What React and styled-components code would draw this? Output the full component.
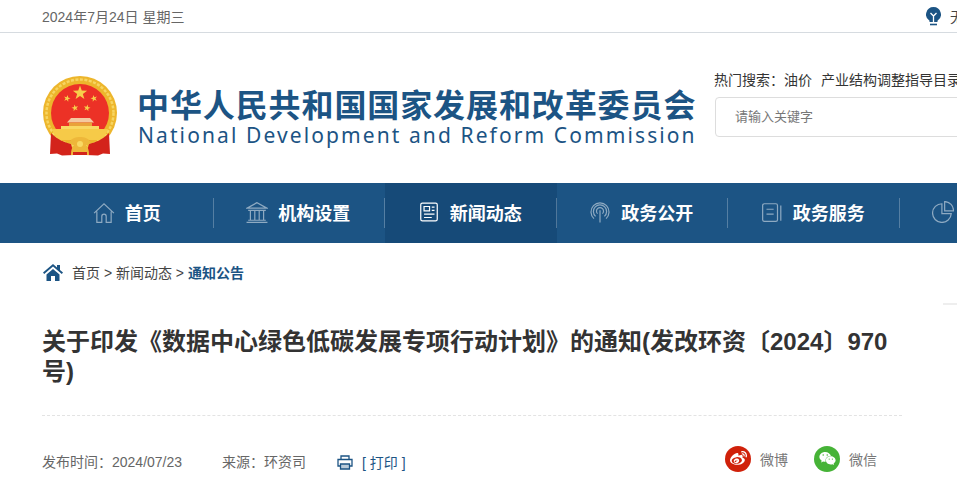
import React from 'react'
import styled, { createGlobalStyle } from 'styled-components'
import { FaWeibo, FaWeixin } from 'react-icons/fa'

const GlobalStyle = createGlobalStyle`
  html, body {
    margin: 0;
    padding: 0;
    background: #fff;
    overflow: hidden;
  }
  body {
    font-family: "Liberation Sans", "Noto Sans CJK SC", sans-serif;
    color: #333;
  }
`

const navItems = [
  { label: '首页', icon: 'home' },
  { label: '机构设置', icon: 'bank' },
  { label: '新闻动态', icon: 'news', active: true },
  { label: '政务公开', icon: 'signal' },
  { label: '政务服务', icon: 'book' },
  { label: '政务数据', icon: 'pie' },
]

const NavIcon = ({ name }) => {
  const paths = {
    home: <path d="M1 11 10 2.500l9 8.500M3.500 9.500V19.500h4.500v-5.500a2 2 0 0 1 4 0v5.500h4.500V9.500" />,
    bank: (
      <path d="M10 1.500 1 6.500h18zM2 8.500h16M4 9v8.500M8 9v8.500M12 9v8.500M16 9v8.500M2 17.500h16M.5 19.500h19" />
    ),
    news: (
      <path d="M4 2h12a1.500 1.500 0 0 1 1.500 1.500v13a1.500 1.500 0 0 1-1.500 1.500H4a1.500 1.500 0 0 1-1.500-1.500v-13A1.500 1.500 0 0 1 4 2zM5.500 5h5v4h-5zM12.500 5.500h2.500M12.500 8.500h2.500M5.500 12h9.500M5.500 15h7" />
    ),
    signal: (
      <path d="M10 8.500v11M6 14a6 6 0 1 1 8 0M4.500 16a8.200 8.200 0 1 1 11 0M7.800 11.500a3.200 3.200 0 1 1 4.400 0" />
    ),
    book: <path d="M3 2.500h10.500a1.500 1.500 0 0 1 1.500 1.500v13a1.500 1.500 0 0 1-1.500 1.500H3A1.500 1.500 0 0 1 1.500 17V4A1.500 1.500 0 0 1 3 2.500zM5 7.500h6.500M5 12h6.500M18 4v14" />,
    pie: <path d="M9 2.500a8.500 8.500 0 1 0 8.500 9H9zM11.500 .5a8 8 0 0 1 8 8.500h-8z" />,
  }
  return (
    <NavSvg viewBox="0 0 20 20" $active={name === 'news'}>
      {paths[name]}
    </NavSvg>
  )
}

const Star = ({ x, y, r, rotate = 0 }) => {
  const pts = []
  for (let i = 0; i < 10; i++) {
    const rad = i % 2 === 0 ? r : r * 0.4
    const a = (Math.PI / 5) * i - Math.PI / 2
    pts.push(`${(x + rad * Math.cos(a)).toFixed(2)},${(y + rad * Math.sin(a)).toFixed(2)}`)
  }
  return <polygon points={pts.join(' ')} fill="#f7cf4b" transform={`rotate(${rotate} ${x} ${y})`} />
}

const Emblem = () => (
  <EmblemSvg viewBox="0 0 76 80">
    <circle cx="38" cy="37" r="37" fill="#edb62c" />
    <circle cx="38" cy="37" r="33.500" fill="none" stroke="#f7d562" strokeWidth="2.500" strokeDasharray="3 1.500" />
    <circle cx="38" cy="37" r="29" fill="#ec3126" />
    <Star x={38} y={17} r={7.500} />
    <Star x={25} y={22.500} r={3.500} rotate={15} />
    <Star x={52} y={22.500} r={3.500} rotate={-15} />
    <Star x={33} y={32} r={3.500} rotate={-12} />
    <Star x={45} y={32} r={3.500} rotate={12} />
    <path d="M25 46.500 29 42h19l4 4.500z" fill="#f4c9a0" />
    <path d="M27 46.500h23V51H27z" fill="#e9a23a" />
    <path d="M19 50h38v3H19z" fill="#f9d964" />
    <path d="M10 53h56c-1 4-4 8-7 11H17c-3-3-6-7-7-11z" fill="#f6ca48" />
    <path d="M9 57c7 7 13 9 20 11l3 11-12 .5-5-2-7 .5z" fill="#d3231b" />
    <path d="M67 57c-7 7-13 9-20 11l-3 11 12 .5 5-2 7 .5z" fill="#d3231b" />
    <path d="M27 66c3-4 7-5 11-5s8 1 11 5c-1 2-3 3-5 3 2 2 3 5 3 10H29c0-5 1-8 3-10-2 0-4-1-5-3z" fill="#eeb73a" />
    <circle cx="38" cy="68" r="3" fill="#f9d964" />
    <path d="M31 76h14v3H31z" fill="#d3231b" />
  </EmblemSvg>
)

export default function App() {
  return (
    <Page>
      <GlobalStyle />
      <TopBar>
        <TopInner>
          <span>2024年7月24日&nbsp;星期三</span>
          <TopRight>
            <svg width="15" height="19" viewBox="0 0 15 19">
              <path d="M7.500 0a7.500 7.500 0 0 0-4 13.800V15h8v-1.200A7.500 7.500 0 0 0 7.500 0z" fill="#1c5484" />
              <path d="M4.500 6l3 3 3-3M7.500 9v6" stroke="#fff" strokeWidth="1.300" fill="none" />
              <path d="M4 17.500h7" stroke="#1c5484" strokeWidth="1.600" />
            </svg>
            <span>无障碍</span>
          </TopRight>
        </TopInner>
      </TopBar>

      <Header>
        <Logo>
          <Emblem />
          <LogoText>
            <CnName>中华人民共和国国家发展和改革委员会</CnName>
            <EnName>National Development and Reform Commission</EnName>
          </LogoText>
        </Logo>
        <SearchBlock>
          <HotWords>
            热门搜索：<HotWord>油价</HotWord>
            <HotWord>产业结构调整指导目录</HotWord>
          </HotWords>
          <SearchBox>请输入关键字</SearchBox>
        </SearchBlock>
      </Header>

      <Nav>
        <NavInner>
          {navItems.map((item) => (
            <NavItem key={item.label} $active={item.active}>
              <NavIcon name={item.icon} />
              {item.label}
            </NavItem>
          ))}
        </NavInner>
      </Nav>

      <Body>
        <Content>
          <Crumbs>
            <svg width="20" height="17" viewBox="0 0 20 17">
              <path d="M10 0 0 8.500l1.200 1.400L10 2.500l8.800 7.400L20 8.500l-3-2.500V1h-3v2.500zM3.500 10.500V17h4.500v-5h4v5h4.500v-6.500L10 5z" fill="#1c5484" />
            </svg>
            <CrumbText>
              首页 &gt; 新闻动态 &gt; <CrumbCurrent>通知公告</CrumbCurrent>
            </CrumbText>
          </Crumbs>
          <Title>关于印发《数据中心绿色低碳发展专项行动计划》的通知(发改环资〔2024〕970号)</Title>
          <Meta>
            <MetaDate>发布时间：2024/07/23</MetaDate>
            <MetaSource>来源：环资司</MetaSource>
            <PrintLink>
              <svg width="16" height="15" viewBox="0 0 16 15" fill="none" stroke="#1c5484" strokeWidth="1.300">
                <path d="M4 4V1h8v3M3.500 11H1V4.500h14V11h-2.500" />
                <path d="M3.500 9h9v5h-9z" fill="#1c5484" fillOpacity=".3" />
              </svg>
              [ 打印 ]
            </PrintLink>
            <Share>
              <ShareItem>
                <ShareDot $color="#d0210a"><FaWeibo size={17} /></ShareDot>
                微博
              </ShareItem>
              <ShareItem>
                <ShareDot $color="#46b337"><FaWeixin size={17} /></ShareDot>
                微信
              </ShareItem>
            </Share>
          </Meta>
        </Content>
        <SideMark />
      </Body>
    </Page>
  )
}

const Page = styled.div`
  width: 957px;
  height: 496px;
  overflow: hidden;
`

const TopBar = styled.div`
  height: 32px;
  border-bottom: 1px solid #d6dbe0;
  padding-left: 42px;
`

const TopInner = styled.div`
  width: 950px;
  height: 100%;
  display: flex;
  align-items: center;
  justify-content: space-between;
  font-size: 14px;
  color: #666;
`

const TopRight = styled.div`
  display: flex;
  align-items: center;
  gap: 9px;
  font-size: 14px;
  color: #444;
`

const Header = styled.div`
  height: 150px;
  padding-left: 42px;
  display: flex;
  gap: 18px;
`

const Logo = styled.div`
  flex: none;
  width: 654px;
  padding-top: 43px;
  display: flex;
  align-items: flex-start;
  gap: 19px;
`

const EmblemSvg = styled.svg`
  flex: none;
  width: 76px;
  height: 80px;
`

const LogoText = styled.div`
  padding-top: 14px;
  color: #1c5484;
`

const CnName = styled.div`
  font-size: 32px;
  line-height: 32px;
  font-weight: 700;
  letter-spacing: 0.9px;
  white-space: nowrap;
`

const EnName = styled.div`
  font-family: "Noto Sans", sans-serif;
  font-size: 21px;
  line-height: 26px;
  letter-spacing: 2.1px;
  margin-left: 1px;
  white-space: nowrap;
`

const SearchBlock = styled.div`
  flex: none;
  width: 320px;
  padding-top: 37px;
`

const HotWords = styled.div`
  height: 20px;
  font-size: 14px;
  line-height: 20px;
  color: #333;
  white-space: nowrap;
`

const HotWord = styled.span`
  margin-right: 9px;
`

const SearchBox = styled.div`
  margin-top: 7px;
  margin-left: 1px;
  box-sizing: border-box;
  height: 40px;
  padding: 0 0 3px 19px;
  display: flex;
  align-items: center;
  border: 1px solid #ddd;
  border-radius: 4px;
  font-size: 13px;
  color: #777;
`

const Nav = styled.div`
  height: 60px;
  background: #1c5484;
  padding-left: 42px;
`

const NavInner = styled.div`
  display: flex;
  height: 100%;
  width: 1100px;
`

const NavItem = styled.div`
  flex: none;
  box-sizing: border-box;
  width: 171.5px;
  height: 100%;
  padding: 0 2px 2px 0;
  position: relative;
  display: flex;
  align-items: center;
  justify-content: center;
  gap: 10px;
  font-size: 18px;
  font-weight: 700;
  color: #fff;
  background: ${(p) => (p.$active ? '#164a78' : 'transparent')};

  &:not(:last-child)::after {
    content: '';
    position: absolute;
    right: 0;
    top: 15px;
    height: 30px;
    width: 1px;
    background: rgba(255, 255, 255, 0.25);
  }
`

const NavSvg = styled.svg`
  flex: none;
  width: 22px;
  height: 22px;
  fill: none;
  stroke: ${(p) => (p.$active ? '#fff' : 'rgba(255, 255, 255, 0.5)')};
  stroke-width: 1.1;
`

const Body = styled.div`
  display: flex;
  padding-left: 42px;
`

const Content = styled.div`
  flex: none;
  width: 860px;
`

const SideMark = styled.div`
  flex: none;
  margin: 60px 0 0 41px;
  width: 14px;
  height: 2px;
  background: #eee;
`

const Crumbs = styled.div`
  height: 58px;
  display: flex;
  align-items: center;
  gap: 9px;
  margin-left: 1px;
`

const CrumbText = styled.div`
  font-size: 14px;
  color: #444;
`

const CrumbCurrent = styled.span`
  font-weight: 700;
  color: #1c5484;
`

const Title = styled.h1`
  margin: 26px 0 0;
  padding-bottom: 28px;
  font-size: 24px;
  line-height: 30px;
  font-weight: 700;
  color: #333;
  border-bottom: 1px dashed #e3e3e3;
`

const Meta = styled.div`
  margin-top: 29px;
  display: flex;
  align-items: center;
  font-size: 14px;
  color: #666;
  height: 32px;
`

const MetaDate = styled.span`
  width: 180px;
`

const MetaSource = styled.span`
  width: 115px;
`

const PrintLink = styled.span`
  display: flex;
  align-items: center;
  gap: 9px;
  padding-top: 2px;
  color: #1c5484;
`

const Share = styled.div`
  margin: 0 25px 5px auto;
  display: flex;
  gap: 26px;
`

const ShareItem = styled.div`
  display: flex;
  align-items: center;
  gap: 9px;
  color: #777;
`

const ShareDot = styled.span`
  width: 26px;
  height: 26px;
  border-radius: 50%;
  display: flex;
  align-items: center;
  justify-content: center;
  color: #fff;
  background: ${(p) => p.$color};
`
